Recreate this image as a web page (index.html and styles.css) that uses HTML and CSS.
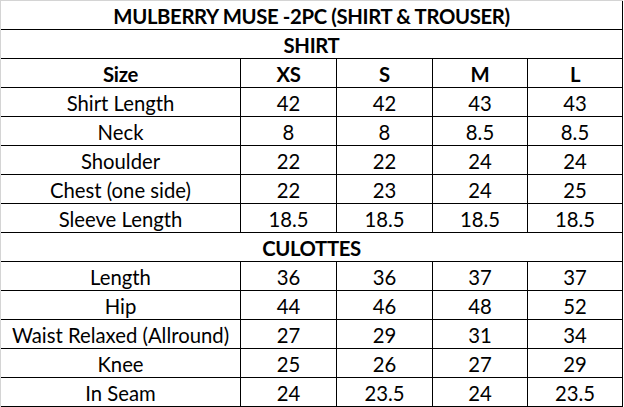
FILE: index.html
```html
<!DOCTYPE html>
<html>
<head>
<meta charset="utf-8">
<link rel="stylesheet" href="styles.css">
</head>
<body>
<div class="sheet">
  <div class="cell span bold">MULBERRY MUSE -2PC (SHIRT &amp; TROUSER)</div>
  <div class="cell span bold">SHIRT</div>
  <div class="cell bold">Size</div><div class="cell bold">XS</div><div class="cell bold">S</div><div class="cell bold">M</div><div class="cell bold">L</div>
  <div class="cell">Shirt Length</div><div class="cell">42</div><div class="cell">42</div><div class="cell">43</div><div class="cell">43</div>
  <div class="cell">Neck</div><div class="cell">8</div><div class="cell">8</div><div class="cell">8.5</div><div class="cell">8.5</div>
  <div class="cell">Shoulder</div><div class="cell">22</div><div class="cell">22</div><div class="cell">24</div><div class="cell">24</div>
  <div class="cell">Chest (one side)</div><div class="cell">22</div><div class="cell">23</div><div class="cell">24</div><div class="cell">25</div>
  <div class="cell">Sleeve Length</div><div class="cell">18.5</div><div class="cell">18.5</div><div class="cell">18.5</div><div class="cell">18.5</div>
  <div class="cell span bold">CULOTTES</div>
  <div class="cell">Length</div><div class="cell">36</div><div class="cell">36</div><div class="cell">37</div><div class="cell">37</div>
  <div class="cell">Hip</div><div class="cell">44</div><div class="cell">46</div><div class="cell">48</div><div class="cell">52</div>
  <div class="cell">Waist Relaxed (Allround)</div><div class="cell">27</div><div class="cell">29</div><div class="cell">31</div><div class="cell">34</div>
  <div class="cell">Knee</div><div class="cell">25</div><div class="cell">26</div><div class="cell">27</div><div class="cell">29</div>
  <div class="cell">In Seam</div><div class="cell">24</div><div class="cell">23.5</div><div class="cell">24</div><div class="cell">23.5</div>
</div>
</body>
</html>
```
FILE: styles.css
```css
html, body {
  margin: 0;
  padding: 0;
  background: #fff;
}
.sheet {
  display: grid;
  grid-template-columns: 240px 96px 96px 95px 95px;
  grid-auto-rows: 29px;
  width: 623px;
  box-sizing: border-box;
  border-top: 1px solid #d4d4d4;
  border-left: 1px solid #d4d4d4;
  font-family: Lato, "Open Sans", sans-serif;
  font-size: 20.3px;
  color: #000;
}
.cell {
  box-sizing: border-box;
  border-right: 1px solid #000;
  border-bottom: 1px solid #000;
  display: flex;
  align-items: center;
  justify-content: center;
  white-space: nowrap;
  padding-top: 2px;
}
.span {
  grid-column: 1 / -1;
}
.bold {
  font-weight: 700;
  letter-spacing: -0.35px;
}
```
